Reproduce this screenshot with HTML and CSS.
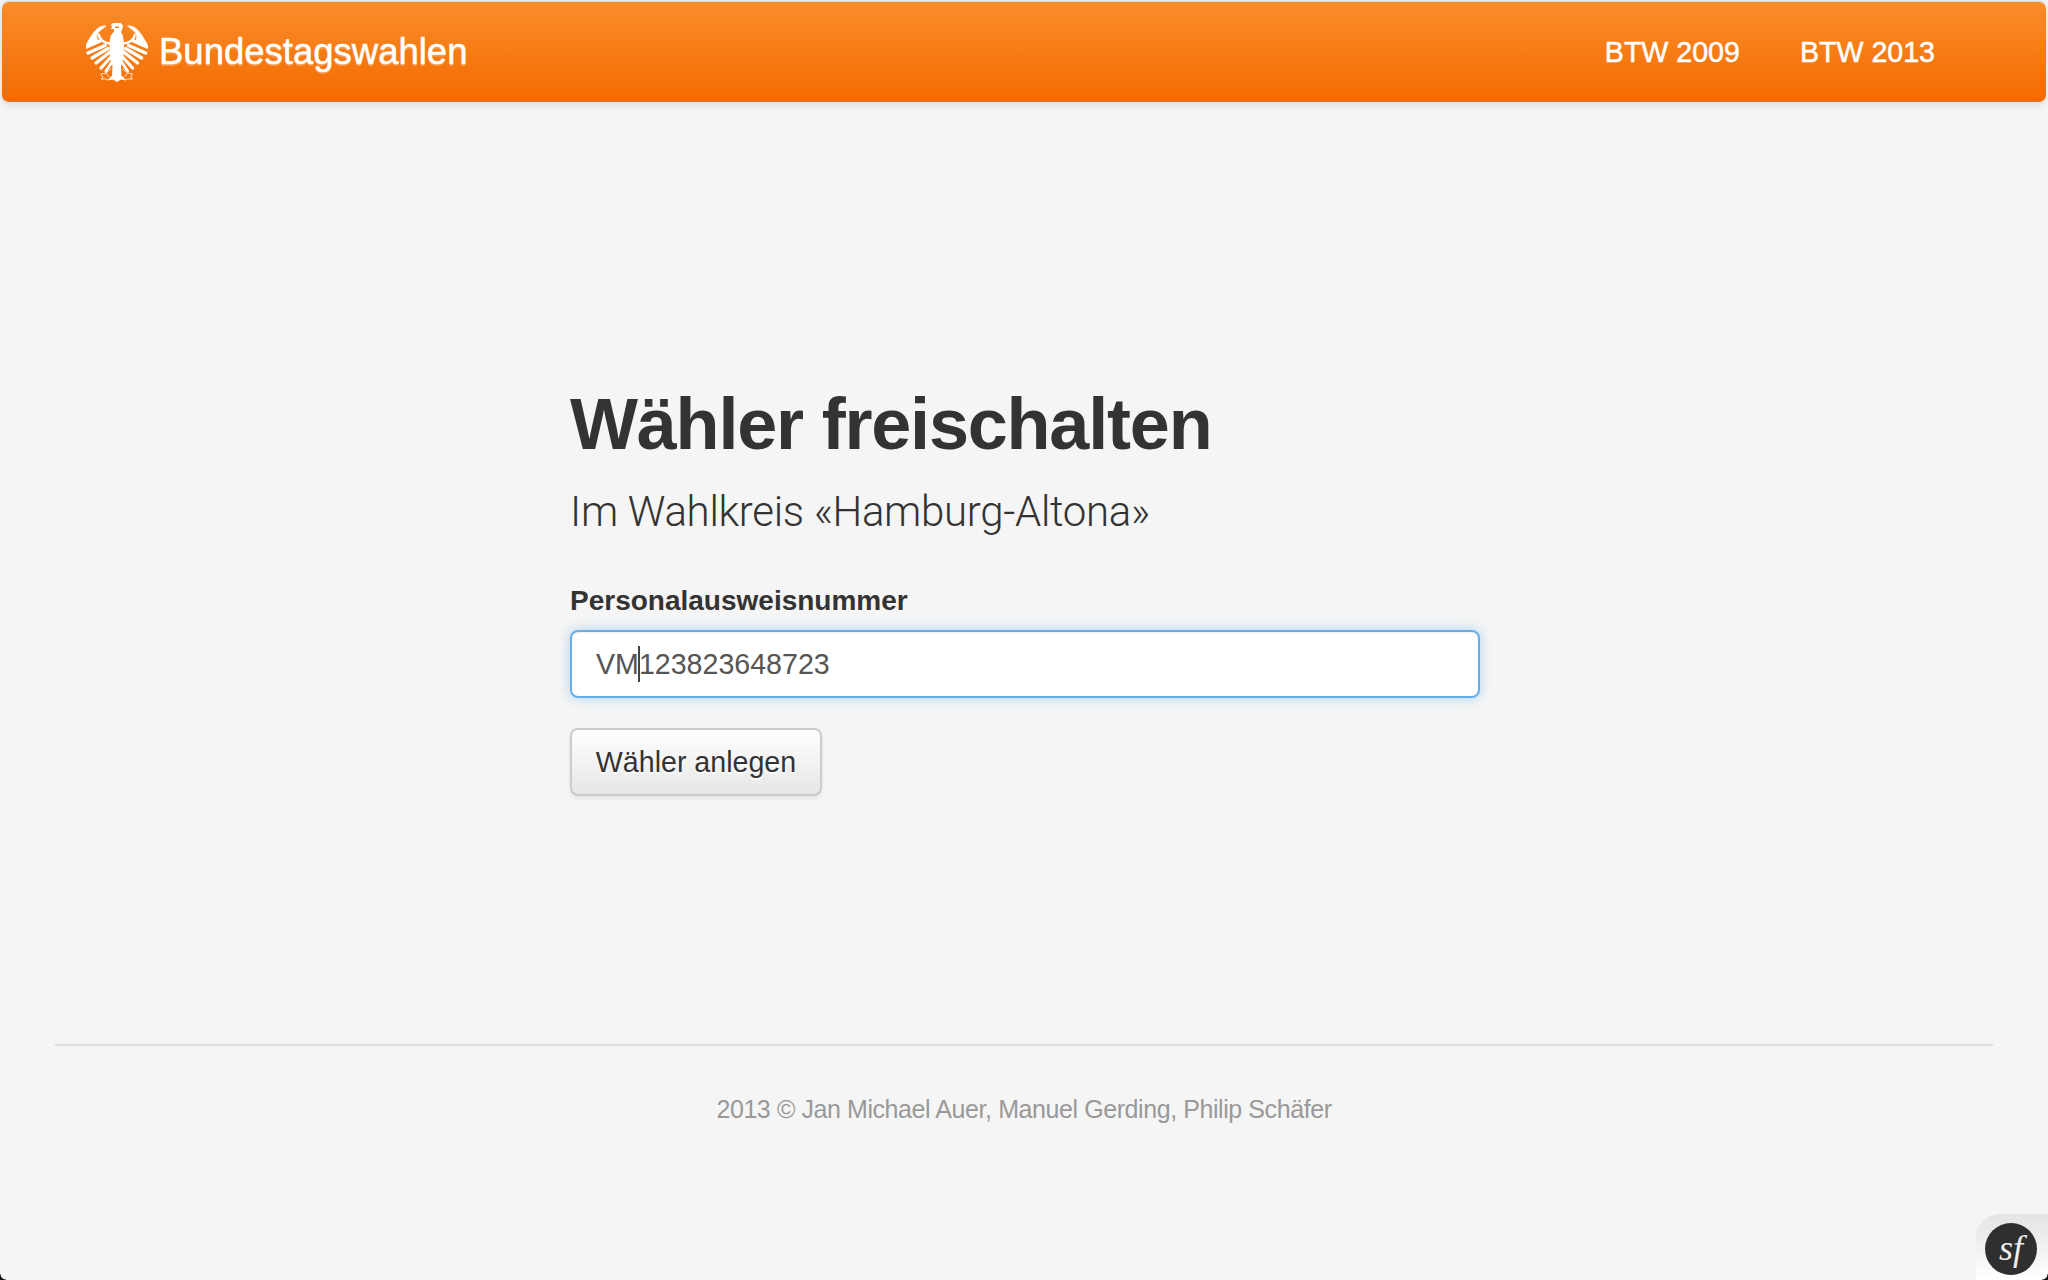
FILE: index.html
```html
<!DOCTYPE html>
<html lang="de">
<head>
    <meta charset="UTF-8">
    <title>Bundestagswahlen</title>
    <link rel="stylesheet" href="styles.css">
</head>
<body>
    <header class="navbar">
        <a class="brand" href="#">
            <svg class="eagle" viewBox="85 24 62 60" width="62" height="60" aria-hidden="true">
                <g id="wing" fill="none" stroke="#fff" stroke-linecap="round">
                    <path d="M101 31L105 28C97 27 92 34 84 49L97 43C94 38 97 34 101 31Z" fill="#fff" stroke-width=".8" stroke-linejoin="round"/>
                    <path d="M110 45.500C103 45.500 98 41 98 37" stroke-width="2.400"/>
                    <path d="M85.500 49L99 43" stroke-width="3.400"/>
                    <path d="M87 55L104 47.500" stroke-width="3.400"/>
                    <path d="M91 60L107 50.500" stroke-width="3.400"/>
                    <path d="M95 65L109 54" stroke-width="3.400"/>
                    <path d="M100 70L110 59" stroke-width="3.200"/>
                    <path d="M105 73L111 64" stroke-width="2.800"/>
                    <path d="M110 71L105 75L100 76L102 79L100 81L105 81L107 82L111 78M105 75L108 79" stroke-width=".8" stroke-linejoin="round"/>
                </g>
                <use href="#wing" transform="translate(231.600 0) scale(-1 1)"/>
                <path fill="#fff" d="M110 27L112 25L120 25L122 28L121 32L120 34L122 38L123 46L122.500 60L120 68L120.500 78L125 82.500L120 81.500L116 84L112 81.500L107 82.500L111 78L111.500 68L109 60L108.500 46L109.500 38L113 33.500L113 31L110 31L111 29Z"/>
                <path fill="#f58320" d="M114 28.500L118 28.500L118 30L114 30Z"/>
            </svg>
            <span>Bundestagswahlen</span>
        </a>
        <nav class="nav-links">
            <a href="#">BTW 2009</a>
            <a href="#">BTW 2013</a>
        </nav>
    </header>

    <main class="container">
        <h1>Wähler freischalten</h1>
        <h2>Im Wahlkreis «Hamburg-Altona»</h2>
        <form>
            <label>Personalausweisnummer</label>
            <div class="field" role="textbox">VM<span class="caret"></span>123823648723</div>
            <button type="button">Wähler anlegen</button>
        </form>
    </main>

    <footer class="footer">
        <p>2013 © Jan Michael Auer, Manuel Gerding, Philip Schäfer</p>
    </footer>

    <div class="sf-toolbar">
        <div class="sf-logo">sf</div>
    </div>
</body>
</html>
```

FILE: styles.css
```css
html, body {
    height: 100%;
}

body {
    margin: 0;
    background-color: #f5f5f5;
    font-family: "Liberation Sans", Arial, sans-serif;
    color: #333;
}

/* rounded window corners */
body::before,
body::after {
    content: "";
    position: fixed;
    bottom: 0;
    width: 6px;
    height: 6px;
}

body::before {
    left: 0;
    background: radial-gradient(circle at top right, transparent 5px, #111 6px);
}

body::after {
    right: 0;
    background: radial-gradient(circle at top left, transparent 5px, #111 6px);
}

.navbar {
    display: flex;
    justify-content: space-between;
    align-items: center;
    height: 100px;
    margin: 2px 2px 0;
    padding: 0 111px 0 84px;
    border-radius: 7px;
    background: linear-gradient(#f98c2a, #f46b00);
    box-shadow: 0 2px 8px rgba(0, 0, 0, .12), 0 -1px 1px rgba(0, 0, 0, .1);
}

.navbar a {
    color: #fff;
    text-decoration: none;
    -webkit-text-stroke: .5px #fff;
}

.brand {
    display: flex;
    align-items: center;
    gap: 11px;
    font-size: 36.5px;
    text-shadow: 0 2px 0 rgba(255, 255, 255, .25);
}

.nav-links {
    display: flex;
    gap: 60px;
    font-size: 28.6px;
}

.container {
    width: 910px;
    margin: 0 0 0 570px;
    padding-top: 282px;
}

h1 {
    margin: 0;
    font-size: 72px;
    line-height: 80px;
    font-weight: bold;
    letter-spacing: -1.2px;
}

h2 {
    margin: 18px 0 0;
    font-family: Roboto, "Liberation Sans", sans-serif;
    font-size: 42px;
    line-height: 60px;
    font-weight: 300;
    letter-spacing: -.31px;
}

label {
    display: block;
    margin-top: 38.5px;
    font-size: 28px;
    line-height: 40px;
    font-weight: bold;
}

.field {
    display: flex;
    align-items: center;
    box-sizing: border-box;
    height: 68px;
    margin-top: 9.5px;
    padding: 0 24px;
    border: 2px solid #66afe9;
    border-radius: 8px;
    background: #fff;
    color: #555;
    font-size: 28.6px;
    box-shadow: inset 0 1px 2px rgba(0, 0, 0, .08), 0 0 12px rgba(102, 175, 233, .5);
}

.caret {
    width: 2px;
    height: 36px;
    margin: 0 -1px;
    background: #444;
}

button {
    display: block;
    box-sizing: border-box;
    width: 252px;
    height: 68px;
    margin-top: 30px;
    padding: 0;
    border: 2px solid #ccc;
    border-radius: 8px;
    background: linear-gradient(#fff, #e6e6e6);
    color: #333;
    font-family: inherit;
    font-size: 28.6px;
    text-shadow: 0 2px 2px #fff;
    box-shadow: 0 2px 4px rgba(0, 0, 0, .08);
}

.footer {
    margin: 248px 55px 0;
    border-top: 2px solid #ddd;
    text-align: center;
    color: #999;
    font-size: 25px;
    letter-spacing: -.42px;
}

.footer p {
    margin: 45px 0 0;
    line-height: 36px;
}

.sf-toolbar {
    position: fixed;
    right: 0;
    bottom: 0;
    box-sizing: border-box;
    width: 72px;
    height: 66px;
    padding: 9px 0 0 9px;
    border-top-left-radius: 24px;
    background: linear-gradient(#e4e4e4, #fff);
}

.sf-logo {
    width: 52px;
    height: 52px;
    border-radius: 50%;
    background: #2f2f2f;
    color: #eee;
    font-family: "Liberation Serif", serif;
    font-style: italic;
    font-size: 36px;
    line-height: 50px;
    text-align: center;
}
```
